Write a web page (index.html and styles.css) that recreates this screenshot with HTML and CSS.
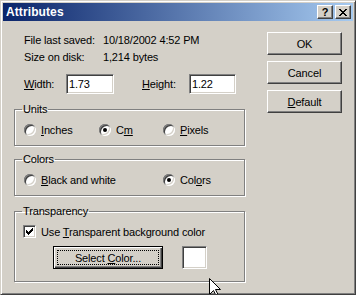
FILE: index.html
```html
<!DOCTYPE html>
<html lang="en">
<head>
  <meta charset="UTF-8" />
  <title>Attributes</title>
  <link rel="stylesheet" href="styles.css">
</head>
<body>

  <div class="window">
    <div class="titlebar">
      <span class="title">Attributes</span>
      <div class="caption-buttons">
        <button class="cap-btn help">?</button>
        <button class="cap-btn close">
          <svg width="8" height="7" viewBox="0 0 8 7" shape-rendering="crispEdges">
            <path d="M0 0h2v1h-2z M6 0h2v1h-2z M1 1h2v1h-2z M5 1h2v1h-2z M2 2h4v1h-4z M3 3h2v1h-2z M2 4h4v1h-4z M1 5h2v1h-2z M5 5h2v1h-2z M0 6h2v1h-2z M6 6h2v1h-2z" fill="#000"/>
          </svg>
        </button>
      </div>
    </div>

    <div class="content">
      <div class="left">
        <div class="info">
          <span>File last saved:</span><span>10/18/2002 4:52 PM</span>
          <span>Size on disk:</span><span>1,214 bytes</span>
        </div>

        <div class="size-row">
          <label class="size-label width-label"><u>W</u>idth:</label>
          <input class="field width-field" value="1.73">
          <label class="size-label height-label"><u>H</u>eight:</label>
          <input class="field height-field" value="1.22">
        </div>

        <fieldset class="group units">
          <legend>Units</legend>
          <div class="options">
            <label class="option"><span class="radio"></span><span><u>I</u>nches</span></label>
            <label class="option"><span class="radio checked"></span><span>C<u>m</u></span></label>
            <label class="option"><span class="radio"></span><span><u>P</u>ixels</span></label>
          </div>
        </fieldset>

        <fieldset class="group colors">
          <legend>Colors</legend>
          <div class="options">
            <label class="option"><span class="radio"></span><span><u>B</u>lack and white</span></label>
            <label class="option"><span class="radio checked"></span><span>Col<u>o</u>rs</span></label>
          </div>
        </fieldset>

        <fieldset class="group transparency">
          <legend>Transparency</legend>
          <label class="option check-option">
            <span class="checkbox">
              <svg width="7" height="7" viewBox="0 0 7 7" shape-rendering="crispEdges">
                <path d="M0 2H1V3H2V4H3V3H4V2H5V1H6V0H7V3H6V4H5V5H4V6H3V7H2V6H1V5H0Z" fill="#000"/>
              </svg>
            </span>
            <span>Use <u>T</u>ransparent background color</span>
          </label>
          <div class="select-row">
            <button class="btn default-btn">Select <u>C</u>olor...</button>
            <div class="swatch"></div>
          </div>
        </fieldset>
      </div>

      <div class="right">
        <button class="btn">OK</button>
        <button class="btn">Cancel</button>
        <button class="btn"><u>D</u>efault</button>
      </div>
    </div>

    <!-- mouse pointer over the dialog -->
    <svg class="cursor" width="13" height="20" viewBox="0 0 13 20">
      <polygon points="0.5,0.5 0.5,16.5 4.5,12.5 7.5,18.5 9.5,17.5 6.5,11.5 11.5,11.5" fill="#fff" stroke="#000" stroke-width="1"/>
    </svg>
  </div>

</body>
</html>
```

FILE: styles.css
```css
body {
  margin: 0;
  font-family: "Liberation Sans", Arial, sans-serif;
  font-size: 11px;
  letter-spacing: -0.15px;
  color: #000;
  background: #d4d0c8;
}

.window {
  position: relative;
  width: 356px;
  height: 295px;
  box-sizing: border-box;
  border: 1px solid;
  border-color: #d4d0c8 #404040 #404040 #d4d0c8;
  box-shadow: inset 1px 1px #fff, inset -1px -1px #808080;
  padding: 2px;
  background: #d4d0c8;
  overflow: hidden;
}

.titlebar {
  height: 18px;
  display: flex;
  align-items: center;
  padding: 0 2px 0 3px;
  background: linear-gradient(to right, #0a246a, #a6caf0);
}

.title {
  flex: 1;
  color: #fff;
  font-weight: bold;
  font-size: 12px;
  letter-spacing: 0.1px;
  line-height: 18px;
}

.caption-buttons {
  display: flex;
  gap: 2px;
}

.cap-btn {
  width: 16px;
  height: 14px;
  box-sizing: border-box;
  padding: 0;
  border: 1px solid;
  border-color: #fff #404040 #404040 #fff;
  box-shadow: inset -1px -1px #808080;
  background: #d4d0c8;
  display: flex;
  align-items: center;
  justify-content: center;
  font-family: "Liberation Sans", Arial, sans-serif;
  font-weight: bold;
  font-size: 11px;
  line-height: 12px;
  color: #000;
}

.content {
  display: flex;
  padding-left: 11px;
}

.left {
  width: 231px;
}

.info {
  display: grid;
  grid-template-columns: 79px auto;
  padding: 11px 0 0 10px;
  line-height: 17px;
}

.size-row {
  display: flex;
  align-items: center;
  height: 20px;
  margin-top: 8px;
  padding-left: 10px;
}

.width-label {
  width: 42px;
}

.height-label {
  width: 47px;
  margin-left: 28px;
}

.field {
  height: 20px;
  box-sizing: border-box;
  padding: 0 2px;
  border: 1px solid;
  border-color: #808080 #fff #fff #808080;
  box-shadow: inset 1px 1px #404040, inset -1px -1px #d4d0c8;
  background: #fff;
  font-family: inherit;
  font-size: 11px;
  letter-spacing: inherit;
  color: #000;
  outline: none;
}

.width-field {
  width: 48px;
}

.height-field {
  width: 47px;
}

.group {
  margin: 0;
  min-width: 0;
  padding: 0 0 9px 9px;
  border: 1px solid #808080;
  box-shadow: inset 1px 1px #fff, 1px 1px #fff;
}

.group legend {
  margin-left: -2px;
  padding: 0 1px;
  line-height: 13px;
}

.units {
  margin-top: 9px;
}

.colors {
  margin-top: 7px;
}

.transparency {
  margin-top: 9px;
  padding-bottom: 12px;
}

.options {
  display: grid;
  height: 13px;
  margin-top: 7px;
  align-items: center;
}

.units .options {
  grid-template-columns: 75px 64px auto;
}

.colors .options {
  grid-template-columns: 139px auto;
}

.option {
  display: flex;
  align-items: center;
  gap: 5px;
}

.radio {
  position: relative;
  width: 12px;
  height: 12px;
  border-radius: 50%;
  background: #fff;
  box-shadow: inset 1px 1px #808080, inset -1px -1px #fff,
              inset 2px 2px #404040, inset -2px -2px #d4d0c8;
}

.radio.checked::after {
  content: "";
  position: absolute;
  left: 4px;
  top: 4px;
  width: 4px;
  height: 4px;
  border-radius: 50%;
  background: #000;
}

.check-option {
  height: 13px;
  margin: 7px 0 0 -1px;
}

.checkbox {
  width: 13px;
  height: 13px;
  box-sizing: border-box;
  border: 1px solid;
  border-color: #808080 #fff #fff #808080;
  box-shadow: inset 1px 1px #404040, inset -1px -1px #d4d0c8;
  background: #fff;
  display: flex;
  align-items: center;
  justify-content: center;
}

.select-row {
  display: flex;
  align-items: center;
  gap: 19px;
  margin: 8px 0 0 29px;
}

.btn {
  width: 75px;
  height: 23px;
  box-sizing: border-box;
  padding: 0;
  border: 1px solid;
  border-color: #fff #404040 #404040 #fff;
  box-shadow: inset -1px -1px #808080;
  background: #d4d0c8;
  font-family: inherit;
  font-size: 11px;
  letter-spacing: inherit;
  color: #000;
}

.default-btn {
  width: 110px;
  border-color: #000;
  box-shadow: inset 1px 1px #fff, inset -1px -1px #404040, inset -2px -2px #808080;
  outline: 1px dotted #000;
  outline-offset: -5px;
}

.swatch {
  width: 25px;
  height: 23px;
  box-sizing: border-box;
  border: 1px solid;
  border-color: #808080 #fff #fff #808080;
  box-shadow: inset 1px 1px #404040, inset -1px -1px #d4d0c8;
  background: #fff;
}

.right {
  display: flex;
  flex-direction: column;
  gap: 6px;
  margin-left: 22px;
  padding-top: 11px;
}

.cursor {
  position: absolute;
  left: 208px;
  top: 277px;
}
```
